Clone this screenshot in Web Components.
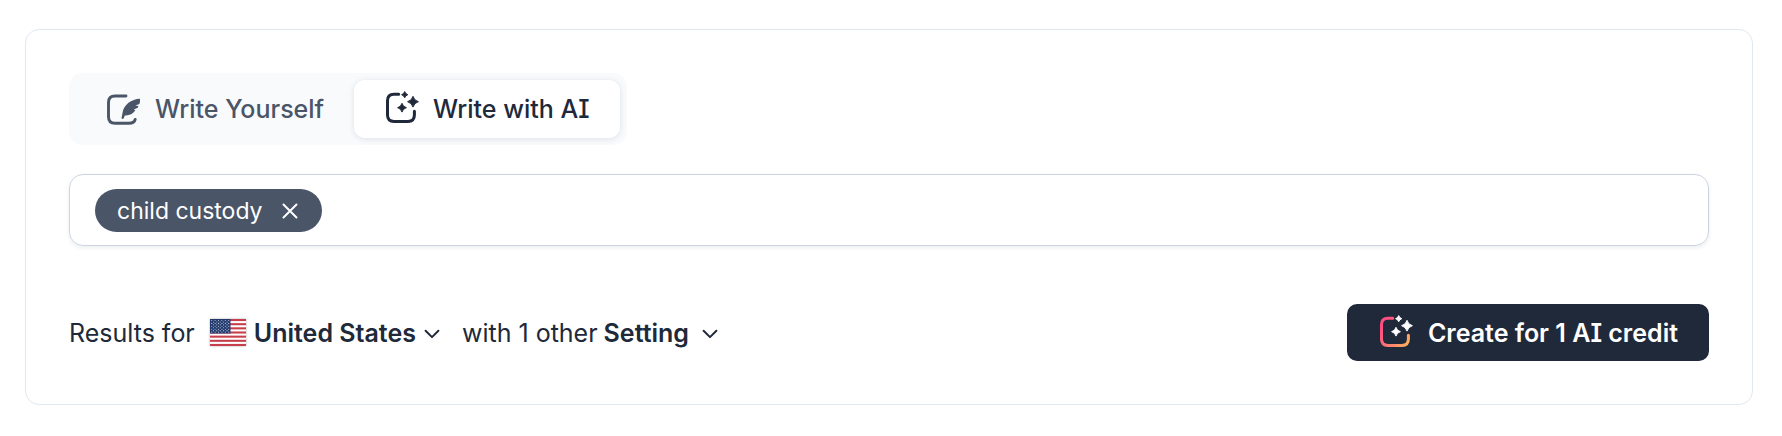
<!DOCTYPE html>
<html lang="en">
<head>
<meta charset="utf-8">
<meta name="viewport" content="width=device-width, initial-scale=1">
<title>Write with AI</title>
<style>
body { margin: 0; padding: 29px 29px 29px 25px; background: #fff; color: #20293a; font: 400 25px/32px Inter, sans-serif; font-feature-settings: "cv08"; }
</style>
</head>
<body>
<composer-card>
  <mode-tabs></mode-tabs>
  <keyword-field></keyword-field>
  <result-bar></result-bar>
</composer-card>
<script>
const define = (name, html, setup) => {
  const template = document.createElement('template');
  template.innerHTML = '<style>*{box-sizing:border-box}button,input{font:inherit;font-feature-settings:inherit;color:inherit;margin:0;padding:0;border:0;background:none}button{cursor:pointer}svg{display:block;flex:none}</style>' + html;
  customElements.define(name, class extends HTMLElement {
    constructor() {
      super();
      this.attachShadow({ mode: 'open' }).append(template.content.cloneNode(true));
      if (setup) setup(this.shadowRoot, this);
    }
  });
};

define('ai-icon', `
<style>:host{display:block;flex:none}</style>
<svg width="36" height="36" viewBox="0 0 36 36" fill="none" aria-hidden="true">
  <defs><linearGradient id="g" gradientUnits="userSpaceOnUse" x1="5" y1="12" x2="31" y2="28"><stop stop-color="#ff4f81"/><stop offset="1" stop-color="#ffb05c"/></linearGradient></defs>
  <path id="frame" d="M14.7 3.3H10Q3.5 3.3 3.5 9.8V24Q3.5 30.4 10 30.4H24Q30.4 30.4 30.4 24V20.3" stroke="currentColor" stroke-width="3" stroke-linecap="round"/>
  <g fill="currentColor" stroke="currentColor" stroke-width="1" stroke-linejoin="round">
    <path d="M20.7 .6Q21.4 3 23.8 3.7Q21.4 4.4 20.7 6.8Q20 4.4 17.6 3.7Q20 3 20.7 .6Z"/>
    <path d="M29 5.3Q30.1 9.6 34.4 10.7Q30.1 11.8 29 16.1Q27.9 11.8 23.6 10.7Q27.9 9.6 29 5.3Z"/>
    <path d="M18 12.3Q18.9 15.8 22.4 16.7Q18.9 17.6 18 21.1Q17.1 17.6 13.6 16.7Q17.1 15.8 18 12.3Z"/>
  </g>
</svg>`, (root, host) => {
  if (host.hasAttribute('gradient')) root.getElementById('frame').setAttribute('stroke', 'url(#g)');
});

define('quill-icon', `
<style>:host{display:block;flex:none}</style>
<svg width="36" height="36" viewBox="0 0 36 36" fill="none" aria-hidden="true">
  <path d="M20 5H9Q2.500 5 2.500 11.500V25.800Q2.500 32.300 9 32.300H23Q28.300 32.300 29.200 28.400" stroke="currentColor" stroke-width="2.900" stroke-linecap="round"/>
  <path d="M34 7.800C25.500 8 17.500 14 16.600 21.500L15.500 27.300Q16.500 28.700 17.800 27.300L18.800 24.400C22.500 24.800 27 23.200 29.400 19.300L27.800 18.600L31.800 16.800L32.400 14.900L29.300 14.400L33.400 13Q34.200 11 34 7.800Z" fill="currentColor"/>
</svg>`);

define('chevron-icon', `
<style>:host{display:block;flex:none}</style>
<svg width="16" height="16" viewBox="0 0 16 16" fill="none" aria-hidden="true"><path d="M1.600 5.800L8 12.100L14.400 5.800" stroke="currentColor" stroke-width="2" stroke-linecap="round" stroke-linejoin="round"/></svg>`);

define('us-flag', `
<style>:host{display:block;flex:none}svg{box-shadow:0 0 2px #0005}</style>
<svg width="36" height="27" viewBox="0 0 36 27" role="img" aria-label="United States flag">
  <path fill="#fff" d="M0 0H36V27H0Z"/><g id="stripes" fill="#c83f4c"></g><path fill="#223a6e" d="M0 0H20.500V14.500H0Z"/><g id="stars" fill="#c5cde0"></g>
</svg>`, root => {
  const stripe = 27 / 13;
  let stripes = '', stars = '';
  for (let i = 0; i < 13; i += 2) stripes += `<rect width="36" y="${i * stripe}" height="${stripe}"/>`;
  for (let r = 0; r < 9; r++) for (let c = r % 2; c < 11; c += 2)
    stars += `<circle cx="${1.7 + c * 1.7}" cy="${1.5 + r * 1.45}" r=".55"/>`;
  root.getElementById('stripes').innerHTML = stripes;
  root.getElementById('stars').innerHTML = stars;
});

define('composer-card', `
<style>:host{display:flex;flex-direction:column;align-items:stretch;padding:43px;border:1px solid #e2e8f0;border-radius:14px}</style><slot></slot>`);

define('mode-tabs', `
<style>
:host{display:block}
.tabs{display:flex;width:fit-content;padding:7px;border-radius:14px;background:#f8fafc}
button{display:flex;align-items:center;gap:13px;height:58px;padding:0 30px;border-radius:11px;color:#4a5568;font-weight:500;white-space:nowrap}
button[aria-selected=true]{color:#20293a;background:#fff;box-shadow:0 1px 6px #0f172a1c}
</style>
<div class="tabs" role="tablist">
  <button role="tab" aria-selected="false"><quill-icon></quill-icon>Write Yourself</button>
  <button role="tab" aria-selected="true"><ai-icon></ai-icon>Write with AI</button>
</div>`);

define('keyword-chip', `
<style>
:host{display:flex;align-items:center;gap:18px;height:43px;padding:0 23px 0 22px;border-radius:22px;background:#4a5568;color:#fff;font-size:23px;white-space:nowrap;box-sizing:border-box}
button{display:flex}
</style>
<slot></slot><button aria-label="Remove keyword"><svg width="18" height="18" viewBox="0 0 18 18" fill="none"><path d="M2.500 2.500L15.500 15.500M15.500 2.500L2.500 15.500" stroke="currentColor" stroke-width="2" stroke-linecap="round"/></svg></button>`);

define('keyword-field', `
<style>
:host{display:flex;gap:12px;margin-top:29px;padding:14px 25px 13px;border:1px solid #cbd5e1;border-radius:14px;box-shadow:0 2px 4px #0f172a12;box-sizing:border-box}
input{flex:1;min-width:0;height:43px;outline:0}
</style>
<keyword-chip>child custody</keyword-chip><input type="text" aria-label="Add keyword">`);

define('result-bar', `
<style>
:host{display:flex;align-items:center;justify-content:space-between;margin-top:58px}
.filters,.filters button{display:flex;align-items:center;white-space:nowrap}
.filters button{font-weight:600;gap:8px}
.country{margin:0 22px 0 15px}
.filters .setting{margin-left:6px;gap:13px}
.create{display:flex;align-items:center;gap:14px;height:57px;padding:0 31px;border-radius:10px;background:#20293a;color:#fff;font-weight:600;white-space:nowrap}
</style>
<div class="filters">
  <span>Results for</span>
  <button class="country" aria-haspopup="listbox"><us-flag></us-flag>United States<chevron-icon></chevron-icon></button>
  <span>with 1 other</span>
  <button class="setting" aria-haspopup="dialog">Setting<chevron-icon></chevron-icon></button>
</div>
<button class="create"><ai-icon gradient></ai-icon>Create for 1 AI credit</button>`);
</script>
</body>
</html>
